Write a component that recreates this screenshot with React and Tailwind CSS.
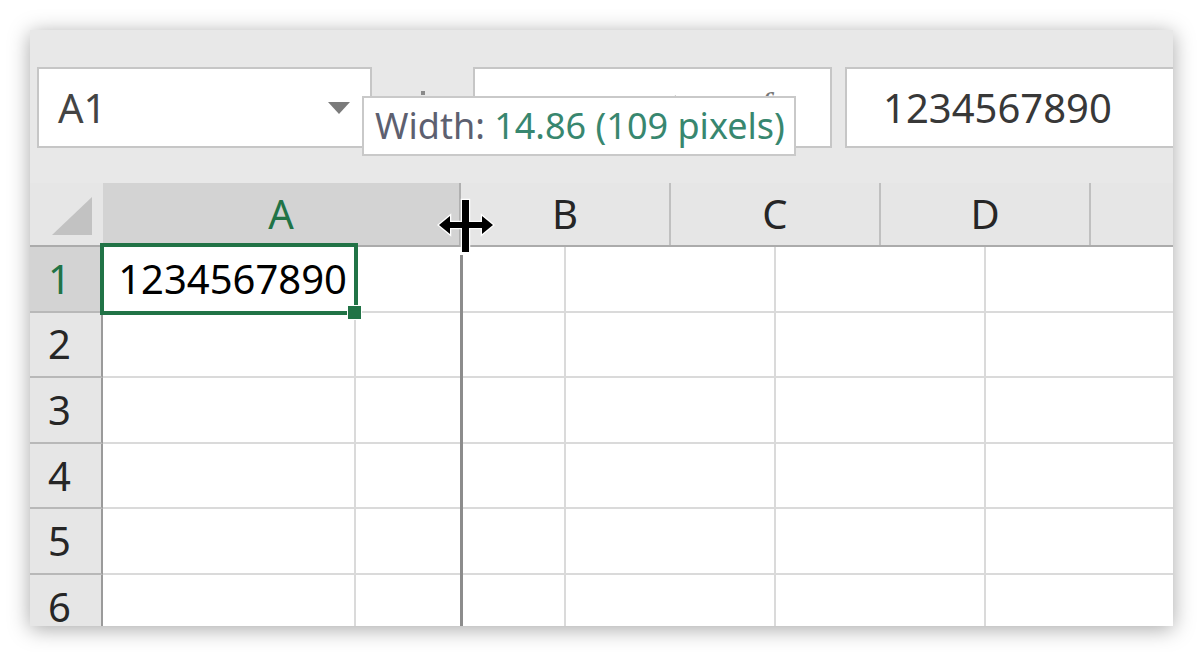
import React from "react";

const rowHeights = [1, 2, 3, 4, 5, 6];

function Triangle() {
  return (
    <svg width="24" height="14" viewBox="0 0 24 14">
      <path d="M1 1 L23 1 L12 13 Z" fill="#7b7b7b" />
    </svg>
  );
}

function ResizeCursor() {
  const d =
    "M26 3 H33 V25 H46 V19 L57 28 L46 37 V31 H33 V55 H26 V31 H14 V37 L3 28 L14 19 V25 H26 Z";
  return (
    <svg width="60" height="58" viewBox="0 0 60 58">
      <path d={d} fill="#000" stroke="#fff" strokeWidth="2.5" strokeLinejoin="miter" paintOrder="stroke" />
    </svg>
  );
}

export default function App() {
  return (
    <div className="w-[1200px] h-[652px] bg-white pt-[30px] pl-[30px] pr-[27px] pb-[26px] overflow-hidden font-['Noto_Sans',sans-serif]">
      <div className="relative w-full h-full bg-[#e8e8e8] shadow-[0_3px_20px_rgba(0,0,0,0.35)] flex flex-col overflow-hidden">
        {/* Toolbar: name box + formula bar */}
        <div className="h-[153px] flex items-start pt-[37px] pl-[7px] shrink-0">
          <div className="w-[335px] h-[81px] bg-white border-2 border-[#c6c6c6] flex items-center justify-between pl-[19px] pr-[19px]">
            <span className="text-[40px] leading-none text-[#444]">A1</span>
            <Triangle />
          </div>
          <div className="w-[101px] h-[81px] flex flex-col items-center pt-[24px] gap-[5px]">
            <div className="w-[4px] h-[4px] bg-[#8a8a8a]" />
            <div className="w-[4px] h-[4px] bg-[#8a8a8a]" />
            <div className="w-[4px] h-[4px] bg-[#8a8a8a]" />
          </div>
          <div className="w-[359px] h-[81px] bg-white border-2 border-[#c6c6c6] flex items-start pt-[25px] pl-[35px]">
            <svg width="26" height="26" viewBox="0 0 26 26" className="mr-[112px]">
              <path d="M3 3 L23 23 M23 3 L3 23" stroke="#999" strokeWidth="2" />
            </svg>
            <svg width="30" height="26" viewBox="0 0 30 26" className="mr-[82px]">
              <path d="M2 15 L10 23 L28 2" stroke="#999" strokeWidth="2" fill="none" />
            </svg>
            <span className="text-[36px] leading-none italic font-['Liberation_Serif',serif] text-[#777] -mt-[7px]">fx</span>
          </div>
          <div className="w-[13px]" />
          <div className="flex-1 h-[81px] bg-white border-2 border-r-0 border-[#c6c6c6] flex items-center pl-[36px]">
            <span className="text-[40px] leading-none text-[#383838]">1234567890</span>
          </div>
        </div>

        {/* Sheet */}
        <div className="flex-1 flex flex-col overflow-hidden">
          {/* column header */}
          <div className="h-[64px] flex shrink-0 bg-[#e6e6e6] border-b-2 border-[#ababab]">
            <div className="w-[73px] h-full relative flex items-end justify-end pr-[11px] pb-[10px]">
              <svg width="40" height="38" viewBox="0 0 40 38">
                <path d="M40 0 L40 38 L0 38 Z" fill="#c2c2c2" />
              </svg>
            </div>
            <div className="w-[358px] h-full bg-[#d3d3d3] border-r-2 border-[#b0b0b0] flex items-center justify-center text-[40px] leading-none text-[#217346]">
              A
            </div>
            <div className="w-[210px] h-full border-r-2 border-[#c0c0c0] flex items-center justify-center text-[40px] leading-none text-[#262626]">
              B
            </div>
            <div className="w-[210px] h-full border-r-2 border-[#c0c0c0] flex items-center justify-center text-[40px] leading-none text-[#262626]">
              C
            </div>
            <div className="w-[210px] h-full border-r-2 border-[#c0c0c0] flex items-center justify-center text-[40px] leading-none text-[#262626]">
              D
            </div>
            <div className="flex-1 h-full" />
          </div>

          {/* rows */}
          {rowHeights.map((n) => (
            <div key={n} className="h-[65.6px] shrink-0 flex">
              <div
                className={
                  n === 1
                    ? "w-[73px] h-full bg-[#d3d3d3] border-r-2 border-b-2 border-r-[#9a9a9a] border-b-[#b8b8b8] flex items-center justify-center pr-[12px] text-[40px] leading-none text-[#217346]"
                    : "w-[73px] h-full bg-[#e6e6e6] border-r-2 border-b-2 border-r-[#9a9a9a] border-b-[#b8b8b8] flex items-center justify-center pr-[12px] text-[40px] leading-none text-[#262626]"
                }
              >
                {n}
              </div>
              <div className="w-[253px] h-full bg-white border-r-2 border-b-2 border-[#dadada] flex items-center justify-end pr-[7px] text-[40px] leading-none text-black">
                {n === 1 ? "1234567890" : ""}
              </div>
              <div className="w-[210px] h-full bg-white border-r-2 border-b-2 border-[#dadada]" />
              <div className="w-[210px] h-full bg-white border-r-2 border-b-2 border-[#dadada]" />
              <div className="w-[210px] h-full bg-white border-r-2 border-b-2 border-[#dadada]" />
              <div className="flex-1 h-full bg-white border-b-2 border-[#dadada]" />
            </div>
          ))}
        </div>

        {/* selection border */}
        <div className="absolute left-[70px] top-[213px] w-[258px] h-[72px] border-[4px] border-[#217346]" />
        <div className="absolute left-[317px] top-[275px] w-[15px] h-[15px] bg-[#217346] border border-white" />

        {/* drag line */}
        <div className="absolute left-[430px] top-[225px] bottom-0 w-[3px] bg-[#8c8c8c]" />

        {/* cursor */}
        <div className="absolute left-[406px] top-[167px]">
          <ResizeCursor />
        </div>

        {/* tooltip */}
        <div className="absolute left-[332px] top-[66px] w-[434px] h-[60px] bg-white border-2 border-[#c9c9c9] flex items-center pl-[11px] text-[36px] leading-none whitespace-nowrap">
          <span className="text-[#5d6070]">Width:&nbsp;</span>
          <span className="text-[#38876f]">14.86 (109 pixels)</span>
        </div>
      </div>
    </div>
  );
}
